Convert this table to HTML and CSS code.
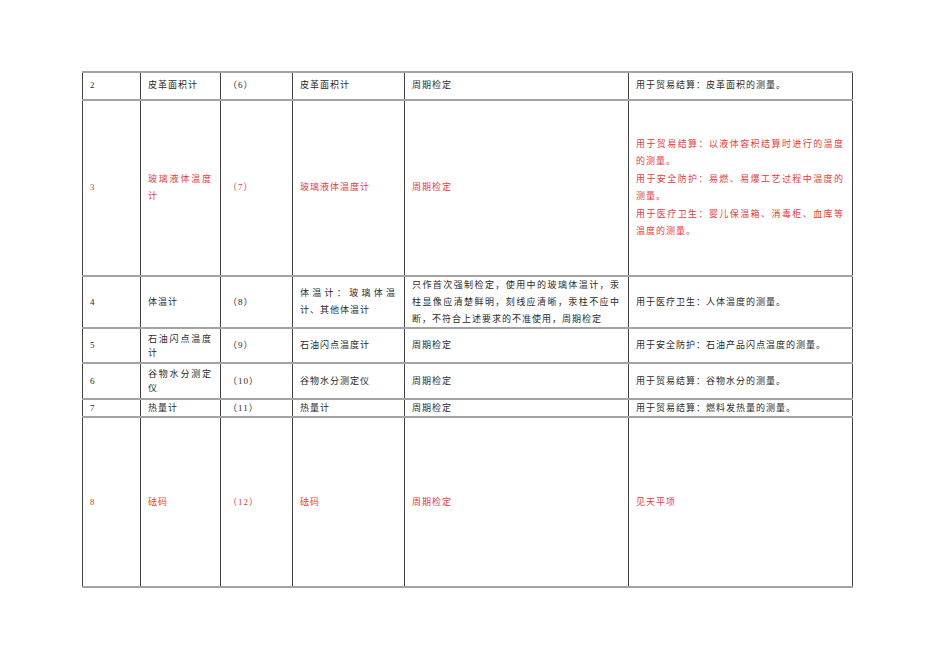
FILE: index.html
```html
<!DOCTYPE html>
<html lang="zh-CN">
<head>
<meta charset="utf-8">
<title>计量器具目录</title>
<link rel="stylesheet" href="styles.css">
</head>
<body>
<table class="sheet">
  <colgroup>
    <col class="c1"><col class="c2"><col class="c3"><col class="c4"><col class="c5"><col class="c6">
  </colgroup>
  <tr class="r1">
    <td>2</td>
    <td>皮革面积计</td>
    <td>（6）</td>
    <td>皮革面积计</td>
    <td>周期检定</td>
    <td>用于贸易结算：皮革面积的测量。</td>
  </tr>
  <tr class="r2 red">
    <td>3</td>
    <td>玻璃液体温度计</td>
    <td>（7）</td>
    <td>玻璃液体温度计</td>
    <td>周期检定</td>
    <td>用于贸易结算：以液体容积结算时进行的温度的测量。<br>用于安全防护：易燃、易爆工艺过程中温度的测量。<br>用于医疗卫生：婴儿保温箱、消毒柜、血库等温度的测量。</td>
  </tr>
  <tr class="r3">
    <td>4</td>
    <td>体温计</td>
    <td>（8）</td>
    <td>体温计：玻璃体温计、其他体温计</td>
    <td>只作首次强制检定，使用中的玻璃体温计，汞柱显像应清楚鲜明，刻线应清晰，汞柱不应中断，不符合上述要求的不准使用，周期检定</td>
    <td>用于医疗卫生：人体温度的测量。</td>
  </tr>
  <tr class="r4">
    <td>5</td>
    <td class="tight">石油闪点温度计</td>
    <td>（9）</td>
    <td>石油闪点温度计</td>
    <td>周期检定</td>
    <td>用于安全防护：石油产品闪点温度的测量。</td>
  </tr>
  <tr class="r5">
    <td>6</td>
    <td class="tight">谷物水分测定仪</td>
    <td>（10）</td>
    <td>谷物水分测定仪</td>
    <td>周期检定</td>
    <td>用于贸易结算：谷物水分的测量。</td>
  </tr>
  <tr class="r6">
    <td>7</td>
    <td>热量计</td>
    <td>（11）</td>
    <td>热量计</td>
    <td>周期检定</td>
    <td>用于贸易结算：燃料发热量的测量。</td>
  </tr>
  <tr class="r7 red">
    <td>8</td>
    <td>砝码</td>
    <td>（12）</td>
    <td>砝码</td>
    <td>周期检定</td>
    <td>见天平项</td>
  </tr>
</table>
</body>
</html>
```
FILE: styles.css
```css
html, body {
  margin: 0;
  padding: 0;
  background: #ffffff;
}

body {
  padding: 71px 0 0 82px;
  font-family: "Liberation Serif", "Noto Sans CJK SC", serif;
  font-size: 9px;
  color: #2a2a2a;
}

.sheet {
  border-collapse: collapse;
  table-layout: fixed;
  width: 770px;
}

.c1 { width: 58px; }
.c2 { width: 80px; }
.c3 { width: 72px; }
.c4 { width: 112px; }
.c5 { width: 224px; }
.c6 { width: 224px; }

.sheet td {
  border-left: 1px solid #444444;
  border-right: 1px solid #444444;
  border-top: 2px solid #a3a3a3;
  border-bottom: 2px solid #a3a3a3;
  padding: 0 8px 0 7px;
  vertical-align: middle;
  text-align: justify;
  letter-spacing: 1px;
  line-height: 17.5px;
  word-break: normal;
  line-break: strict;
}

.sheet td.tight {
  line-height: 14px;
}

.red td {
  color: #e63a40;
}

.r1 td { height: 26px; }
.r2 td { height: 174px; }
.r3 td { height: 50px; line-height: 16.75px; }
.r4 td { height: 33px; }
.r5 td { height: 34px; }
.r6 td { height: 16px; line-height: 14px; }
.r7 td { height: 168px; }
```
